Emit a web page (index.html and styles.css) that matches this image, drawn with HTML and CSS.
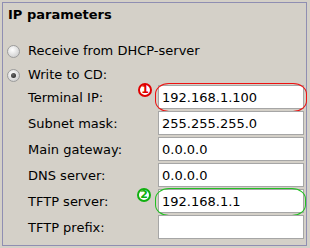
FILE: index.html
```html
<!DOCTYPE html>
<html>
<head>
<meta charset="utf-8">
<link rel="stylesheet" href="styles.css">
</head>
<body>
<div class="panel">
  <div class="title">IP parameters</div>
  <div class="choices">
    <label class="choice"><span class="radio"></span><span>Receive from DHCP-server</span></label>
    <label class="choice"><span class="radio on"></span><span>Write to CD:</span></label>
  </div>
  <div class="form">
    <div class="lbl">Terminal IP:</div>
    <div class="field">
      <div class="box">192.168.1.100</div>
      <span class="mark red"></span>
      <span class="badge red-badge">1</span>
    </div>
    <div class="lbl">Subnet mask:</div>
    <div class="field"><div class="box">255.255.255.0</div></div>
    <div class="lbl">Main gateway:</div>
    <div class="field"><div class="box">0.0.0.0</div></div>
    <div class="lbl">DNS server:</div>
    <div class="field"><div class="box">0.0.0.0</div></div>
    <div class="lbl">TFTP server:</div>
    <div class="field">
      <div class="box">192.168.1.1</div>
      <span class="mark green"></span>
      <span class="badge green-badge">2</span>
    </div>
    <div class="lbl">TFTP prefix:</div>
    <div class="field"><div class="box"></div></div>
  </div>
</div>
</body>
</html>
```
FILE: styles.css
```css
html, body {
  margin: 0;
  padding: 0;
  background: #d4d0c8;
}
body {
  width: 310px;
  height: 248px;
  font-family: "DejaVu Sans", Verdana, sans-serif;
  font-size: 13px;
  color: #000;
}
.panel {
  margin: 2px 0 0 2px;
  width: 303px;
  height: 242px;
  border: 1px solid #8f8eb2;
  box-sizing: content-box;
  padding: 0;
}
.title {
  font-weight: bold;
  line-height: 16px;
  padding: 4px 0 0 5px;
}
.choices {
  margin-top: 18px;
  display: flex;
  flex-direction: column;
  gap: 4px;
}
.choice {
  display: flex;
  align-items: center;
  height: 20px;
  line-height: 20px;
  padding-left: 4px;
  gap: 8px;
}
.radio {
  position: relative;
  width: 11px;
  height: 11px;
  border-radius: 50%;
  border: 1px solid #9c9c9c;
  background: radial-gradient(circle at 40% 35%, #ffffff 0%, #e4e4e4 45%, #c4c4c4 100%);
  flex: none;
}
.radio.on::after {
  content: "";
  position: absolute;
  left: 3px;
  top: 3px;
  width: 5px;
  height: 5px;
  border-radius: 50%;
  background: radial-gradient(circle at 40% 35%, #6a6a6a, #202020);
}
.form {
  display: grid;
  grid-template-columns: 130px 146px;
  grid-auto-rows: 24px;
  row-gap: 2px;
  padding-left: 25px;
}
.lbl {
  line-height: 24px;
  padding-top: 1px;
}
.field {
  position: relative;
}
.box {
  height: 22px;
  line-height: 23px;
  border: 1px solid #a6a6a6;
  background: #fff;
  padding: 0 3px;
}
.mark {
  position: absolute;
  border: 1px solid;
  border-radius: 14px / 11px;
  box-sizing: border-box;
}
.mark.red {
  border-color: #ee1111;
  left: -3px;
  top: -2px;
  width: 152px;
  height: 29px;
}
.mark.green {
  border-color: #22c022;
  left: -3px;
  top: -1px;
  width: 151px;
  height: 28px;
}
.badge {
  position: absolute;
  width: 14px;
  height: 14px;
  box-sizing: border-box;
  border-radius: 50%;
  border: 2px solid;
  background: #fff;
  font-size: 11px;
  font-weight: bold;
  line-height: 10px;
  text-align: center;
}
.red-badge {
  border-color: #e00000;
  color: #e00000;
  left: -20px;
  top: -2px;
}
.green-badge {
  border-color: #10b010;
  color: #10b010;
  left: -21px;
  top: -1px;
}
```
